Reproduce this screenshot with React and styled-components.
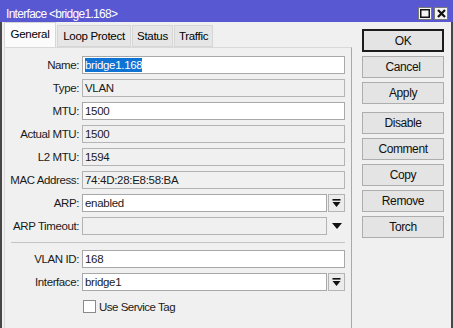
import React from "react";
import styled, { createGlobalStyle } from "styled-components";

const Global = createGlobalStyle`
  html, body { margin: 0; padding: 0; background: #f0f0f0; }
  * { box-sizing: border-box; }
  body { font-family: "Liberation Sans", Arial, sans-serif; font-size: 11px; color: #000; }
`;

const Window = styled.div`
  width: 453px;
  height: 328px;
  display: flex;
  flex-direction: column;
  overflow: hidden;
  background: #5858d2;
`;

const TitleBar = styled.div`
  height: 22px;
  flex: none;
  display: flex;
  align-items: center;
  padding: 5px 5px 0 6px;
  color: #fff;
  font-size: 12px;
  letter-spacing: -0.7px;
`;

const TitleText = styled.div`
  flex: 1;
`;

const TitleButtons = styled.div`
  display: flex;
  gap: 2px;
`;

const TitleBtn = styled.div`
  width: 14px;
  height: 13px;
  background: #f4f4f4;
  border: 1px solid #7a7a7a;
  display: flex;
  align-items: center;
  justify-content: center;
`;

const Client = styled.div`
  flex: 1;
  display: flex;
  background: #f0f0f0;
  border-left: 2px solid #474747;
  border-right: 2px solid #474747;
  padding: 1px 0 0 2px;
  min-height: 0;
`;

const LeftCol = styled.div`
  width: 348px;
  display: flex;
  flex-direction: column;
`;

const Tabs = styled.div`
  height: 24px;
  display: flex;
  align-items: flex-end;
  position: relative;
  z-index: 1;
`;

const Tab = styled.div`
  width: ${(p) => p.w}px;
  height: ${(p) => (p.active ? 25 : 22)}px;
  margin-right: 1px;
  display: flex;
  align-items: center;
  justify-content: center;
  padding-bottom: ${(p) => (p.active ? 3 : 0)}px;
  background: ${(p) => (p.active ? "#fbfbfb" : "#e6e6e6")};
  border: 1px solid #d6d6d6;
  border-bottom: ${(p) => (p.active ? "none" : "1px solid #d6d6d6")};
  font-size: 11.5px;
  letter-spacing: -0.3px;
`;

const Panel = styled.div`
  flex: 1;
  border: 1px solid #d9d9d9;
  border-right: 1px solid #a9a9a9;
  border-bottom: none;
  padding: 8px 6px 0 0;
  display: flex;
  flex-direction: column;
  gap: 5px;
`;

const Row = styled.div`
  display: flex;
  align-items: center;
  height: 18px;
`;

const Label = styled.div`
  width: 74px;
  flex: none;
  text-align: right;
  margin-right: 3px;
  color: #1a1a1a;
  font-size: 11.5px;
  letter-spacing: -0.4px;
  white-space: nowrap;
`;

const Field = styled.div`
  flex: 1;
  height: 18px;
  border: 1px solid ${(p) => (p.ro ? "#b4b4b4" : "#a8a8a8")};
  background: ${(p) => (p.ro ? "#f0f0f0" : "#ffffff")};
  display: flex;
  align-items: center;
  padding-left: 2px;
  color: #1a1a1a;
  font-size: 11.5px;
  letter-spacing: -0.3px;
  white-space: nowrap;
  overflow: hidden;
`;

const Selected = styled.span`
  background: #0e73d2;
  color: #fff;
  padding: 1px 0;
`;

const DropBtn = styled.div`
  width: 17px;
  height: 18px;
  flex: none;
  margin-left: 1px;
  border: 1px solid ${(p) => (p.plain ? "transparent" : "#b4b4b4")};
  background: ${(p) => (p.plain ? "transparent" : "#ececec")};
  display: flex;
  align-items: center;
  justify-content: center;
`;

const Separator = styled.div`
  height: 1px;
  margin: 2px 0 2px 6px;
  background: #c4c4c4;
`;

const CheckRow = styled.div`
  display: flex;
  align-items: center;
  height: 21px;
  padding-left: 78px;
`;

const CheckBox = styled.div`
  width: 13px;
  height: 13px;
  border: 1px solid #8a8a8a;
  background: #fff;
  margin-right: 3px;
`;

const CheckLabel = styled.span`
  font-size: 11.5px;
  letter-spacing: -0.5px;
  color: #1a1a1a;
`;

const RightCol = styled.div`
  width: 82px;
  margin-left: 10px;
  padding-top: 6px;
  display: flex;
  flex-direction: column;
  gap: 4px;
`;

const Button = styled.div`
  height: ${(p) => (p.primary ? 23 : 22)}px;
  border: ${(p) => (p.primary ? "2px solid #1c1c1c" : "1px solid #adadad")};
  background: #e4e4e4;
  display: flex;
  align-items: center;
  justify-content: center;
  margin-top: ${(p) => (p.gapTop ? 4 : 0)}px;
  font-size: 12px;
  letter-spacing: -0.4px;
  color: #111;
`;

const DropIcon = () => (
  <svg width="9" height="9" viewBox="0 0 9 9">
    <rect x="0.5" y="0" width="8" height="1.6" fill="#111" />
    <polygon points="0.5,3 8.5,3 4.5,8" fill="#111" />
  </svg>
);

const TriIcon = () => (
  <svg width="10" height="6" viewBox="0 0 10 6">
    <polygon points="0,0 10,0 5,6" fill="#111" />
  </svg>
);

const fields = [
  { label: "Name:", value: "bridge1.168", selected: true },
  { label: "Type:", value: "VLAN", ro: true },
  { label: "MTU:", value: "1500" },
  { label: "Actual MTU:", value: "1500", ro: true },
  { label: "L2 MTU:", value: "1594", ro: true },
  { label: "MAC Address:", value: "74:4D:28:E8:58:BA", ro: true },
  { label: "ARP:", value: "enabled", drop: "box" },
  { label: "ARP Timeout:", value: "", ro: true, drop: "plain" },
];

const buttons = ["OK", "Cancel", "Apply", "Disable", "Comment", "Copy", "Remove", "Torch"];

function FieldRow({ f }) {
  return (
    <Row>
      <Label>{f.label}</Label>
      <Field ro={f.ro}>{f.selected ? <Selected>{f.value}</Selected> : f.value}</Field>
      {f.drop === "box" && (
        <DropBtn>
          <DropIcon />
        </DropBtn>
      )}
      {f.drop === "plain" && (
        <DropBtn plain>
          <TriIcon />
        </DropBtn>
      )}
    </Row>
  );
}

export default function App() {
  return (
    <>
      <Global />
      <Window>
        <TitleBar>
          <TitleText>Interface &lt;bridge1.168&gt;</TitleText>
          <TitleButtons>
            <TitleBtn>
              <svg width="10" height="9" viewBox="0 0 10 9">
                <rect x="0.75" y="0.75" width="8.5" height="7.5" fill="none" stroke="#111" strokeWidth="1.5" />
              </svg>
            </TitleBtn>
            <TitleBtn>
              <svg width="9" height="9" viewBox="0 0 9 9">
                <path d="M1 1 L8 8 M8 1 L1 8" stroke="#111" strokeWidth="2.2" />
              </svg>
            </TitleBtn>
          </TitleButtons>
        </TitleBar>
        <Client>
          <LeftCol>
            <Tabs>
              <Tab active w={52}>General</Tab>
              <Tab w={74}>Loop Protect</Tab>
              <Tab w={41}>Status</Tab>
              <Tab w={39}>Traffic</Tab>
            </Tabs>
            <Panel>
              {fields.map((f) => (
                <FieldRow key={f.label} f={f} />
              ))}
              <Separator />
              <FieldRow f={{ label: "VLAN ID:", value: "168" }} />
              <FieldRow f={{ label: "Interface:", value: "bridge1", drop: "box" }} />
              <CheckRow>
                <CheckBox />
                <CheckLabel>Use Service Tag</CheckLabel>
              </CheckRow>
            </Panel>
          </LeftCol>
          <RightCol>
            {buttons.map((b) => (
              <Button key={b} primary={b === "OK"} gapTop={b === "Disable"}>
                {b}
              </Button>
            ))}
          </RightCol>
        </Client>
      </Window>
    </>
  );
}
